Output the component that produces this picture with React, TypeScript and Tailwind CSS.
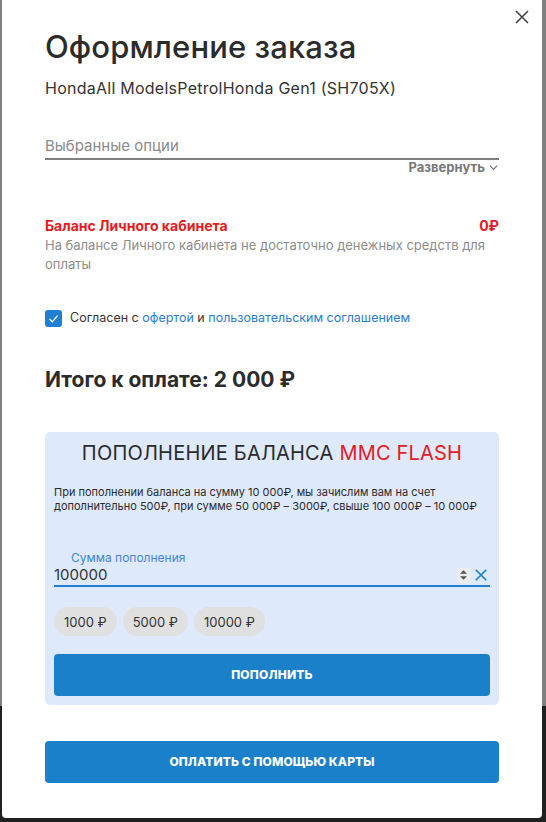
import React from "react";

export default function App() {
  return (
    <div
      className="w-[546px] h-[822px] overflow-hidden bg-[linear-gradient(to_bottom,#808080_0,#808080_706px,#202020_706px)] pl-[2px]"
      style={{ fontFamily: "Inter, 'Noto Sans', sans-serif" }}
    >
      <div className="relative w-[540px] h-[818px] bg-white rounded-b-[4px] px-[43px] pt-[29px]">
        <button className="absolute right-[12px] top-[9px] w-[16px] h-[16px] text-[#444]">
          <svg viewBox="0 0 16 16" width="16" height="16" fill="none" stroke="currentColor" strokeWidth="1.6">
            <path d="M2 2 L14 14 M14 2 L2 14" />
          </svg>
        </button>

        <h1 className="text-[31px] leading-[36px] font-medium text-[#2b2b2b] tracking-[0.1px]">Оформление заказа</h1>
        <div className="mt-[13px] text-[16px] leading-[20px] text-[#333] tracking-[0.25px]">HondaAll ModelsPetrolHonda Gen1 (SH705X)</div>

        <div className="mt-[38px] border-b-2 border-[#7f7f7f] pb-[2px] text-[15px] leading-[20px] text-[#8a8a8a]">
          Выбранные опции
        </div>
        <div className="mt-[-2px] flex justify-end items-center gap-[3px] text-[13px] leading-[18px] font-bold text-[#777]">
          <span>Развернуть</span>
          <svg viewBox="0 0 12 12" width="11" height="11" fill="none" stroke="currentColor" strokeWidth="1.4">
            <path d="M2 4 L6 8 L10 4" />
          </svg>
        </div>

        <div className="mt-[41px] flex justify-between text-[14px] leading-[18px] font-bold text-[#e31b23]">
          <span>Баланс Личного кабинета</span>
          <span>0₽</span>
        </div>
        <div className="mt-[1px] text-[13px] leading-[19px] text-[#8c8c8c]">
          На балансе Личного кабинета не достаточно денежных средств для оплаты
        </div>

        <div className="mt-[35px] flex items-center gap-[8px] text-[12.5px] leading-[18px]">
          <span className="w-[17px] h-[17px] rounded-[3px] bg-[#1e7fd4] flex items-center justify-center">
            <svg viewBox="0 0 16 16" width="13" height="13" fill="none" stroke="white" strokeWidth="1.5">
              <path d="M3 8.5 L6.5 12 L13 4.5" />
            </svg>
          </span>
          <span className="text-[#333]">
            Согласен с <span className="text-[#2a7bd1]">офертой</span> и{" "}
            <span className="text-[#2a7bd1]">пользовательским соглашением</span>
          </span>
        </div>

        <div className="mt-[40px] text-[21px] leading-[26px] font-bold text-[#2b2b2b]">Итого к оплате: 2 000 ₽</div>

        <div className="mt-[39px] h-[273px] rounded-[5px] bg-[#dfe9fc] px-[9px] pt-[8px]">
          <div className="text-center text-[20px] leading-[26px] text-[#2b2b2b] tracking-[0.2px]">
            ПОПОЛНЕНИЕ БАЛАНСА <span className="text-[#e31b23]">MMC FLASH</span>
          </div>
          <div className="mt-[19px] text-[11px] leading-[14px] text-[#2b2b2b]">
            При пополнении баланса на сумму 10 000₽, мы зачислим вам на счет дополнительно 500₽, при сумме 50 000₽ – 3000₽, свыше 100 000₽ – 10 000₽
          </div>

          <div className="mt-[38px] border-b-2 border-[#1e7fd4]">
            <div className="pl-[17px] text-[12px] leading-[14px] text-[#3f86d6]">Сумма пополнения</div>
            <div className="flex items-center h-[20px]">
              <span className="flex-1 text-[15px] leading-[20px] text-[#333]">100000</span>
              <span className="w-[13px] h-[15px] bg-[#ececec] flex flex-col items-center justify-center gap-[2px] mr-[4px]">
                <svg viewBox="0 0 8 4" width="7" height="4"><path d="M0 4 L4 0 L8 4 Z" fill="#555" /></svg>
                <svg viewBox="0 0 8 4" width="7" height="4"><path d="M0 0 L4 4 L8 0 Z" fill="#555" /></svg>
              </span>
              <svg viewBox="0 0 16 16" width="14" height="14" fill="none" stroke="#1e7fd4" strokeWidth="2" className="mr-[2px]">
                <path d="M2 2 L14 14 M14 2 L2 14" />
              </svg>
            </div>
          </div>

          <div className="mt-[20px] flex gap-[6px] text-[13px] leading-[18px] text-[#333]">
            <span className="h-[29px] px-[10px] rounded-full bg-[#e0e0e0] flex items-center">1000 ₽</span>
            <span className="h-[29px] px-[10px] rounded-full bg-[#e0e0e0] flex items-center">5000 ₽</span>
            <span className="h-[29px] px-[10px] rounded-full bg-[#e0e0e0] flex items-center">10000 ₽</span>
          </div>

          <button className="mt-[18px] w-full h-[42px] rounded-[4px] bg-[#1a80c9] text-white text-[12px] font-extrabold tracking-[0.2px]">
            ПОПОЛНИТЬ
          </button>
        </div>

        <button className="mt-[36px] w-full h-[42px] rounded-[4px] bg-[#1a80c9] text-white text-[12px] font-extrabold tracking-[0.1px]">
          ОПЛАТИТЬ С ПОМОЩЬЮ КАРТЫ
        </button>
      </div>
    </div>
  );
}
